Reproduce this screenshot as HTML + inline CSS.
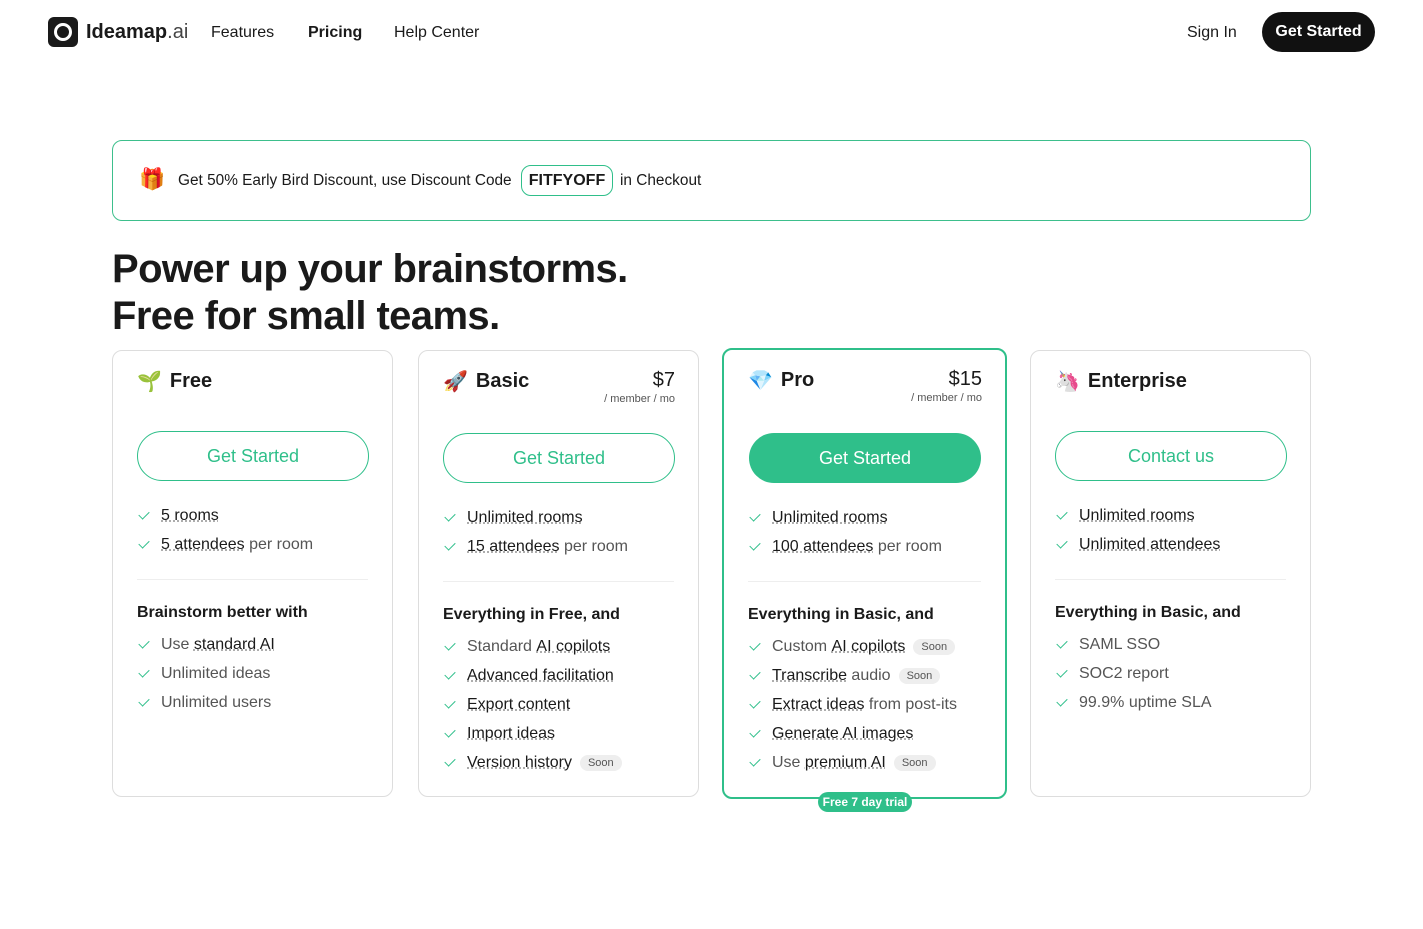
<!DOCTYPE html>
<html><head><meta charset="utf-8"><style>
*{box-sizing:border-box;margin:0;padding:0}
body{width:1423px;height:929px;background:#fff;font-family:"Liberation Sans",sans-serif;color:#1a1a1a;position:relative;overflow:hidden}
.abs{position:absolute}
.nav a{position:absolute;top:24px;font-size:16px;color:#1a1a1a}
.banner{left:112px;top:140px;width:1199px;height:81px;border:1px solid #3dbf8c;border-radius:10px}
h1{position:absolute;left:112px;top:246px;font-size:40px;line-height:47px;font-weight:bold;letter-spacing:-0.6px}
.card{position:absolute;top:350px;height:447px;border:1px solid #ddd;border-radius:10px;width:281px}
.card.pro{top:348px;height:451px;border:2px solid #2fbf8a;width:285px}
.title{position:absolute;left:24px;top:18px;font-size:20px;font-weight:bold;display:flex;align-items:center;gap:8px}
.title span.e{font-size:20px;font-family:"DejaVu Sans",sans-serif}
.price{position:absolute;right:23px;top:18px;text-align:right;font-size:20px}
.price small{display:block;font-size:11px;color:#555;margin-top:1px}
.btn{position:absolute;left:24px;width:232px;height:50px;border:1px solid #2fbf8a;border-radius:25px;color:#2fbf8a;font-size:18px;display:flex;align-items:center;justify-content:center}
.pro .btn{background:#2fbf8a;color:#fff;left:25px}
ul{position:absolute;left:24px;list-style:none;font-size:16px;color:#555}
li{height:29px;display:flex;align-items:center}
li:before{content:"";width:9px;height:5px;border-left:1.5px solid #2fbf8a;border-bottom:1.5px solid #2fbf8a;transform:rotate(-45deg);margin:0 12px 4px 2px}
u{color:#1a1a1a;text-decoration:underline dotted #999}
.hr{position:absolute;left:24px;right:24px;height:1px;background:#eee}
.sec{position:absolute;left:24px;font-size:16px;font-weight:bold;color:#1a1a1a}
.soon{font-size:11px;color:#555;background:#eee;border-radius:9px;padding:2px 8px;margin-left:8px}
</style></head><body>
<div class="abs" style="left:48px;top:17px;width:30px;height:30px;background:#1a1a1a;border-radius:6px"><div class="abs" style="left:6px;top:6px;width:18px;height:18px;border:3px solid #fff;border-radius:50%"></div></div>
<div class="abs" style="left:86px;top:21px;font-size:20px;font-weight:bold">Ideamap<span style="font-weight:normal;color:#444">.ai</span></div>
<div class="nav"><a style="left:211px">Features</a><a style="left:308px;font-weight:bold">Pricing</a><a style="left:394px">Help Center</a><a style="left:1187px">Sign In</a></div>
<div class="abs" style="left:1262px;top:12px;width:113px;height:40px;background:#111;border-radius:20px;color:#fff;font-size:16px;font-weight:bold;display:flex;align-items:center;justify-content:center">Get Started</div>
<div class="abs banner"></div>
<div class="abs" style="left:139px;top:167px;font-size:21px;font-family:'DejaVu Sans',sans-serif;color:#e33">🎁</div>
<div class="abs" style="left:178px;top:172px;font-size:15.4px">Get 50% Early Bird Discount, use Discount Code</div>
<div class="abs" style="left:521px;top:165px;width:92px;height:31px;border:1px solid #2fbf8a;border-radius:10px;font-size:16px;font-weight:bold;display:flex;align-items:center;justify-content:center">FITFYOFF</div>
<div class="abs" style="left:620px;top:172px;font-size:15.4px">in Checkout</div>
<h1>Power up your brainstorms.<br>Free for small teams.</h1>

<div class="card" style="left:112px">
<div class="title"><span class="e">🌱</span>Free</div>
<div class="btn" style="top:80px">Get Started</div>
<ul style="top:150px"><li><u>5 rooms</u></li><li><u>5 attendees</u>&nbsp;per room</li></ul>
<div class="hr" style="top:228px"></div>
<div class="sec" style="top:253px">Brainstorm better with</div>
<ul style="top:279px"><li>Use&nbsp;<u>standard AI</u></li><li>Unlimited ideas</li><li>Unlimited users</li></ul>
</div>

<div class="card" style="left:418px">
<div class="title"><span class="e">🚀</span>Basic</div>
<div class="price">$7<small>/ member / mo</small></div>
<div class="btn" style="top:82px">Get Started</div>
<ul style="top:152px"><li><u>Unlimited rooms</u></li><li><u>15 attendees</u>&nbsp;per room</li></ul>
<div class="hr" style="top:230px"></div>
<div class="sec" style="top:255px">Everything in Free, and</div>
<ul style="top:281px"><li>Standard&nbsp;<u>AI copilots</u></li><li><u>Advanced facilitation</u></li><li><u>Export content</u></li><li><u>Import ideas</u></li><li><u>Version history</u><span class="soon">Soon</span></li></ul>
</div>

<div class="card pro" style="left:722px">
<div class="title"><span class="e">💎</span>Pro</div>
<div class="price">$15<small>/ member / mo</small></div>
<div class="btn" style="top:83px;border:none">Get Started</div>
<ul style="top:153px"><li><u>Unlimited rooms</u></li><li><u>100 attendees</u>&nbsp;per room</li></ul>
<div class="hr" style="top:231px"></div>
<div class="sec" style="top:256px">Everything in Basic, and</div>
<ul style="top:282px"><li>Custom&nbsp;<u>AI copilots</u><span class="soon">Soon</span></li><li><u>Transcribe</u>&nbsp;audio<span class="soon">Soon</span></li><li><u>Extract ideas</u>&nbsp;from post-its</li><li><u>Generate AI images</u></li><li>Use&nbsp;<u>premium AI</u><span class="soon">Soon</span></li></ul>
<div class="abs" style="left:94px;top:442px;width:94px;height:20px;background:#2fbf8a;color:#fff;font-size:12px;font-weight:bold;border-radius:10px;display:flex;align-items:center;justify-content:center">Free 7 day trial</div>
</div>

<div class="card" style="left:1030px">
<div class="title"><span class="e">🦄</span>Enterprise</div>
<div class="btn" style="top:80px">Contact us</div>
<ul style="top:150px"><li><u>Unlimited rooms</u></li><li><u>Unlimited attendees</u></li></ul>
<div class="hr" style="top:228px"></div>
<div class="sec" style="top:253px">Everything in Basic, and</div>
<ul style="top:279px"><li>SAML SSO</li><li>SOC2 report</li><li>99.9% uptime SLA</li></ul>
</div>
</body></html>
